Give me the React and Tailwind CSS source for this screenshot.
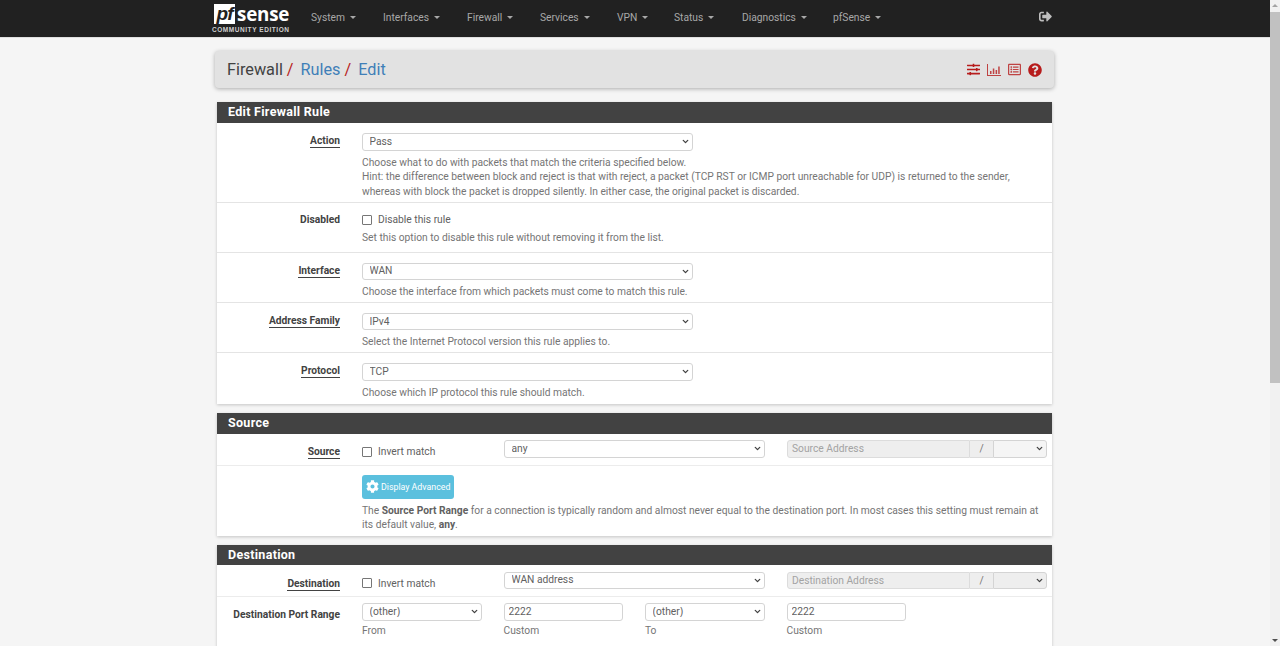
import React from 'react'
import { ChevronDown } from 'lucide-react'
import { FaCog, FaQuestionCircle, FaRegListAlt, FaSignOutAlt, FaSlidersH } from 'react-icons/fa'

const navItems = [
  { label: 'System', width: 'w-[72px]' },
  { label: 'Interfaces', width: 'w-[84px]' },
  { label: 'Firewall', width: 'w-[73px]' },
  { label: 'Services', width: 'w-[77px]' },
  { label: 'VPN', width: 'w-[57px]' },
  { label: 'Status', width: 'w-[68px]' },
  { label: 'Diagnostics', width: 'w-[91px]' },
  { label: 'pfSense', width: 'w-[60px]' },
]

const inputClass = 'block h-[17.5px] w-full rounded-[3px] border border-[#d4d4d4] bg-white px-[4px] text-[10.25px] leading-none text-[#616161]'

function BarIcon() {
  return (
    <svg viewBox="0 0 14 12" className="h-[12px] w-[14px] opacity-80" fill="#b71c1c">
      <path d="M0 0h1v11h13v1H0z" />
      <path d="M3 7h1.5v3H3zM5.8 4.5h1.5V10H5.8zM8.6 6h1.5v4H8.6zM11.2 2.5h1.5V10h-1.5z" />
    </svg>
  )
}

function Select({ value, className = 'rounded-[3px] bg-white' }) {
  return (
    <div className="relative">
      <select
        defaultValue={value}
        className={`block h-[17.5px] w-full appearance-none border border-[#d4d4d4] pl-[6.5px] text-[10.25px] leading-none text-[#616161] ${className}`}
      >
        <option>{value}</option>
      </select>
      <ChevronDown size={9} strokeWidth={3.5} className="pointer-events-none absolute right-[3px] top-[4px] text-[#424242]" />
    </div>
  )
}

function Label({ children, abbr }) {
  return (
    <div className="w-[123px] shrink-0 text-right text-[10.25px] font-bold leading-[15px] text-[#424242]">
      <span className={abbr ? 'border-b border-[#424242]' : ''}>{children}</span>
    </div>
  )
}

function Help({ children }) {
  return <div className="text-[10.25px] leading-[14.6px] text-[#757575]">{children}</div>
}

function Check({ label }) {
  return (
    <label className="flex items-center gap-[6px] text-[10.25px] leading-[15px] text-[#616161]">
      <input type="checkbox" className="h-[10px] w-[10px] appearance-none rounded-[1px] border border-[#767676] bg-white" />
      {label}
    </label>
  )
}

function SelectRow({ label, value, help, spacing = 'pb-[2.1px] pt-[10px] border-b border-[#e4e4e4]' }) {
  return (
    <div className={`flex gap-[22px] ${spacing}`}>
      <Label abbr>{label}</Label>
      <div className="w-[331px]">
        <Select value={value} />
        <div className="mt-[5px] w-[670px]">{help}</div>
      </div>
    </div>
  )
}

function Panel({ title, children }) {
  return (
    <div className="mb-[9px] bg-white shadow-[0_1px_3px_rgba(0,0,0,0.2)]">
      <div className="h-[20.5px] bg-[#424242] pl-[11px] text-[12.5px] font-bold leading-[20.5px] tracking-[0.3px] text-white">{title}</div>
      {children}
    </div>
  )
}

function AddressRow({ label, value, placeholder, groupSelect }) {
  return (
    <div className="flex h-[32px] gap-[22px] border-b border-[#ececec] pt-[6.5px]">
      <div className="pt-[4px]"><Label abbr>{label}</Label></div>
      <div className="w-[120px] pt-[4px]"><Check label="Invert match" /></div>
      <div className="w-[261px]"><Select value={value} /></div>
      <div className="flex w-[260px]">
        <input readOnly placeholder={placeholder} className="h-[17.5px] w-[183px] rounded-l-[3px] border border-[#dcdcdc] bg-[#eeeeee] px-[4px] text-[10.25px] placeholder:text-[#a3a3a3]" />
        <div className="h-[17.5px] w-[23px] border-y border-[#dcdcdc] bg-[#eeeeee] text-center text-[10.25px] leading-[15px] text-[#757575]">/</div>
        <div className="w-[54px]"><Select value="" className={`rounded-r-[3px] ${groupSelect}`} /></div>
      </div>
    </div>
  )
}

function PortCell({ select, value, caption }) {
  return (
    <div>
      {select ? <Select value={value} /> : <input readOnly value={value} className={inputClass} />}
      <div className="mt-[3.5px]"><Help>{caption}</Help></div>
    </div>
  )
}

export default function App() {
  return (
    <div className="flex h-[646px] overflow-hidden bg-[#f5f5f5] font-['Roboto',sans-serif]">
      <div className="min-w-0 flex-1">
        <nav className="flex h-[38px] items-center border-b border-[#e0e0e0] bg-[#212121] pb-[2px]">
          <div className="ml-[212px] w-[99px] shrink-0 pt-[2px]">
            <div className="flex h-[21px] items-start pl-[2px]">
              <span className="mr-[2px] h-[20px] w-[21px] bg-white text-center font-['Liberation_Sans',sans-serif] text-[19px] font-bold italic leading-[19px] tracking-[-1px] text-[#212121]">pf</span>
              <span className="font-['Open_Sans',sans-serif] text-[18.8px] font-bold leading-[21px] tracking-[-0.2px] text-white">sense</span>
            </div>
            <div className="mt-[1px] whitespace-nowrap font-['Liberation_Sans',sans-serif] text-[6.5px] font-bold leading-[8px] tracking-[0.55px] text-[#d0d0d0]">COMMUNITY EDITION</div>
          </div>
          <div className="flex">
            {navItems.map(item => (
              <div key={item.label} className={`${item.width} flex shrink-0 items-center whitespace-nowrap text-[10.25px] text-[#a8a8a8]`}>
                {item.label}
                <span className="ml-[5px] h-0 w-0 border-x-[3px] border-t-[3px] border-x-transparent border-t-[#a8a8a8]" />
              </div>
            ))}
          </div>
          <div className="ml-auto mr-[218px] -mt-[2px] text-[#bdbdbd]"><FaSignOutAlt size={13} /></div>
        </nav>

        <div className="ml-[217px] w-[835px] pt-[13px]">
          <div className="-mx-[2px] flex h-[37px] items-center justify-between rounded-[4px] bg-[#e2e2e2] px-[12px] shadow-[0_1px_4px_rgba(0,0,0,0.3)]">
            <div className="mt-[1px] text-[16.25px] text-[#424242]">
              Firewall<span className="ml-[4px] mr-[7px] text-[#b71c1c]">/</span>
              <span className="text-[#3f7fb8]">Rules</span><span className="ml-[4px] mr-[7px] text-[#b71c1c]">/</span>
              <span className="text-[#3f7fb8]">Edit</span>
            </div>
            <div className="flex items-center gap-[7px] text-[#b71c1c]">
              <FaSlidersH size={13} />
              <BarIcon />
              <FaRegListAlt size={13} className="opacity-80" />
              <FaQuestionCircle size={14} />
            </div>
          </div>

          <div className="pt-[14px]">
            <Panel title="Edit Firewall Rule">
              <SelectRow
                label="Action"
                value="Pass"
                spacing="pb-[2.5px] pt-[10.5px] border-b border-[#e4e4e4]"
                help={
                  <>
                    <Help>Choose what to do with packets that match the criteria specified below.</Help>
                    <Help>Hint: the difference between block and reject is that with reject, a packet (TCP RST or ICMP port unreachable for UDP) is returned to the sender, whereas with block the packet is dropped silently. In either case, the original packet is discarded.</Help>
                  </>
                }
              />
              <div className="flex h-[50px] gap-[22px] border-b border-[#e4e4e4] pt-[9.5px]">
                <Label>Disabled</Label>
                <div>
                  <Check label="Disable this rule" />
                  <div className="mt-[4px]"><Help>Set this option to disable this rule without removing it from the list.</Help></div>
                </div>
              </div>
              <SelectRow label="Interface" value="WAN" help={<Help>Choose the interface from which packets must come to match this rule.</Help>} />
              <SelectRow label="Address Family" value="IPv4" help={<Help>Select the Internet Protocol version this rule applies to.</Help>} />
              <SelectRow label="Protocol" value="TCP" spacing="pb-[3.8px] pt-[10px]" help={<Help>Choose which IP protocol this rule should match.</Help>} />
            </Panel>

            <Panel title="Source">
              <AddressRow label="Source" value="any" placeholder="Source Address" groupSelect="bg-[#f5f5f5]" />
              <div className="pb-[3px] pl-[145px] pr-[8px] pt-[9px]">
                <button className="flex h-[24px] w-[92px] items-center gap-[2px] rounded-[3px] bg-[#5bc0de] pl-[4px] text-[8.8px] text-white">
                  <FaCog size={13} />
                  <span className="mt-[3px]">Display Advanced</span>
                </button>
                <div className="mt-[5px]">
                  <Help>The <b className="text-[#616161]">Source Port Range</b> for a connection is typically random and almost never equal to the destination port. In most cases this setting must remain at its default value, <b className="text-[#616161]">any</b>.</Help>
                </div>
              </div>
            </Panel>

            <Panel title="Destination">
              <AddressRow label="Destination" value="WAN address" placeholder="Destination Address" groupSelect="bg-[#eeeeee]" />
              <div className="flex gap-[22px] pb-[30px] pt-[6px]">
                <div className="pt-[4px]"><Label>Destination Port Range</Label></div>
                <div className="grid grid-cols-[119.5px_119.5px_119.5px_119.5px] gap-x-[22px]">
                  <PortCell select value="(other)" caption="From" />
                  <PortCell value="2222" caption="Custom" />
                  <PortCell select value="(other)" caption="To" />
                  <PortCell value="2222" caption="Custom" />
                </div>
              </div>
            </Panel>
          </div>
        </div>
      </div>

      <div className="flex w-[10px] shrink-0 flex-col items-center bg-[#f1f1f1]">
        <div className="mt-[4px] h-0 w-0 border-x-[3px] border-b-[3px] border-x-transparent border-b-[#a3a3a3]" />
        <div className="mt-[5px] h-[371px] w-full bg-[#c1c1c1]" />
        <div className="mb-[4px] mt-auto h-0 w-0 border-x-[3px] border-t-[3px] border-x-transparent border-t-[#505050]" />
      </div>
    </div>
  )
}
